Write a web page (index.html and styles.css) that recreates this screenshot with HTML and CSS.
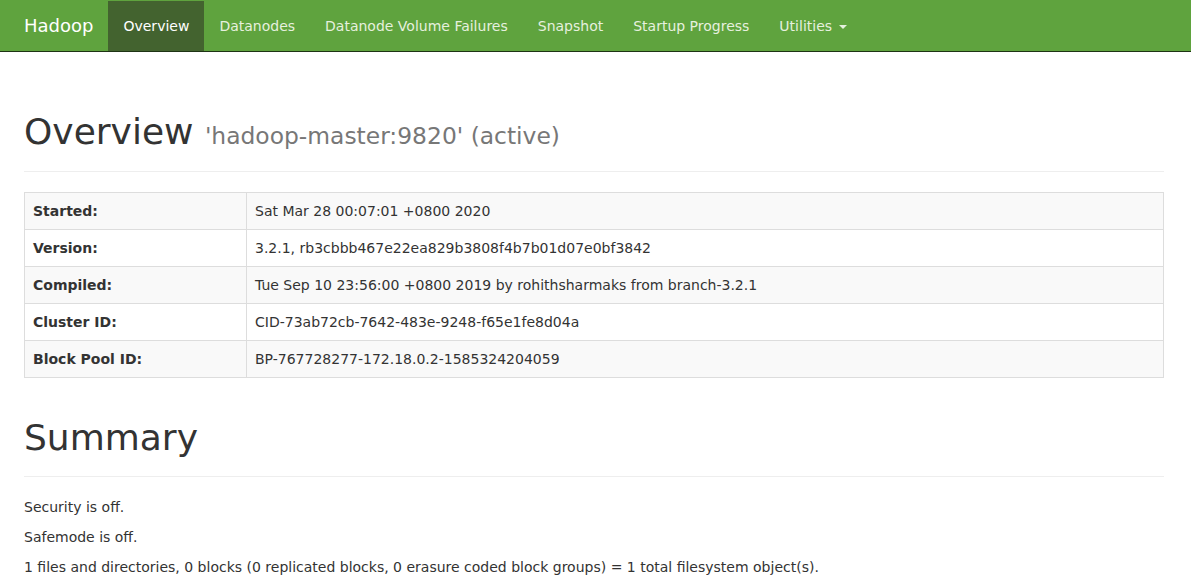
FILE: index.html
```
<!DOCTYPE html>
<html>
<head>
<meta charset="utf-8">
<title>Namenode information</title>
<link rel="stylesheet" href="styles.css">
</head>
<body>
<header class="navbar">
  <div class="navbar-inner">
    <a class="brand" href="#">Hadoop</a>
    <ul class="nav">
      <li class="active"><a href="#">Overview</a></li>
      <li><a href="#">Datanodes</a></li>
      <li><a href="#">Datanode Volume Failures</a></li>
      <li><a href="#">Snapshot</a></li>
      <li><a href="#">Startup Progress</a></li>
      <li><a href="#">Utilities <span class="caret"></span></a></li>
    </ul>
  </div>
</header>
<main class="container">
  <div class="page-header">
    <h1>Overview <small>'hadoop-master:9820' (active)</small></h1>
  </div>
  <table class="table">
    <tbody>
      <tr><th>Started:</th><td>Sat Mar 28 00:07:01 +0800 2020</td></tr>
      <tr><th>Version:</th><td>3.2.1, rb3cbbb467e22ea829b3808f4b7b01d07e0bf3842</td></tr>
      <tr><th>Compiled:</th><td>Tue Sep 10 23:56:00 +0800 2019 by rohithsharmaks from branch-3.2.1</td></tr>
      <tr><th>Cluster ID:</th><td>CID-73ab72cb-7642-483e-9248-f65e1fe8d04a</td></tr>
      <tr><th>Block Pool ID:</th><td>BP-767728277-172.18.0.2-1585324204059</td></tr>
    </tbody>
  </table>
  <div class="page-header">
    <h1>Summary</h1>
  </div>
  <p>Security is off.</p>
  <p>Safemode is off.</p>
  <p>1 files and directories, 0 blocks (0 replicated blocks, 0 erasure coded block groups) = 1 total filesystem object(s).</p>
</main>
</body>
</html>
```

FILE: styles.css
```
* { box-sizing: border-box; }
html, body { margin: 0; padding: 0; }
body {
  font-family: "DejaVu Sans", sans-serif;
  font-size: 14px;
  line-height: 20px;
  color: #333;
  background: #fff;
}
a { text-decoration: none; }

.navbar {
  background-color: #5fa33e;
  border-bottom: 1px solid #1e3314;
  border-top: 1px solid #5fa33e;
  margin-bottom: 20px;
}
.navbar-inner {
  display: flex;
  align-items: stretch;
  height: 50px;
  padding-left: 9px;
}
.brand {
  display: block;
  padding: 15px;
  font-size: 18px;
  line-height: 20px;
  color: #fff;
}
.nav {
  display: flex;
  list-style: none;
  margin: 0;
  padding: 0;
}
.nav li a {
  display: block;
  padding: 15px;
  line-height: 20px;
  color: #e6f0de;
}
.nav li.active a {
  background-color: #43632f;
  color: #fff;
}
.caret {
  display: inline-block;
  width: 0;
  height: 0;
  margin-left: 2px;
  vertical-align: middle;
  border-top: 4px solid;
  border-left: 4px solid transparent;
  border-right: 4px solid transparent;
}

.container {
  width: 1140px;
  margin-left: 24px;
}
.container::before { content: " "; display: table; }

.page-header {
  margin: 40px 0 20px;
  padding-bottom: 9px;
  border-bottom: 1px solid #eee;
}
h1 {
  font-size: 36px;
  font-weight: 500;
  line-height: 1.1;
  margin: 20px 0 10px;
}
h1 small {
  font-size: 65%;
  font-weight: normal;
  color: #777;
  line-height: 1;
}

.table {
  width: 100%;
  border-collapse: collapse;
  border: 1px solid #ddd;
  margin-bottom: 20px;
}
.table th, .table td {
  padding: 8px;
  border: 1px solid #ddd;
  line-height: 20px;
  text-align: left;
  vertical-align: top;
}
.table th {
  width: 222px;
  font-weight: bold;
}
.table tr:nth-child(odd) { background-color: #f9f9f9; }

p { margin: 0 0 10px; }
```
